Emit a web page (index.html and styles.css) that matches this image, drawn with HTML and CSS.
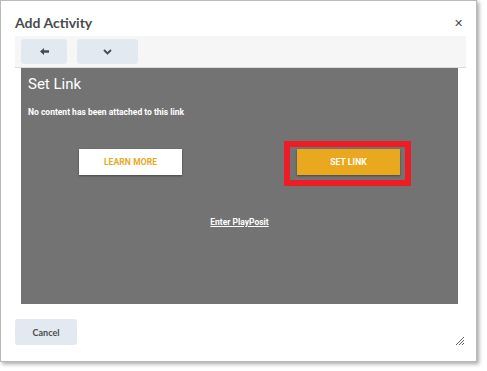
FILE: index.html
```html
<!DOCTYPE html>
<html>
<head>
<meta charset="utf-8">
<link rel="stylesheet" href="styles.css">
</head>
<body>
<div class="dialog">
  <div class="header">
    <span class="title">Add Activity</span>
    <span class="close">&#x2715;</span>
  </div>
  <div class="frame">
    <div class="toolbar">
      <div class="tbtn back">
        <svg width="9" height="7" viewBox="0 0 9 7"><path d="M0 3.5 L4 0 L4 2.3 L9 2.3 L9 4.7 L4 4.7 L4 7 Z" fill="#494c4e"/></svg>
      </div>
      <div class="tbtn drop">
        <svg width="9" height="6" viewBox="0 0 9 6"><path d="M1 1 L4.5 4.5 L8 1" fill="none" stroke="#494c4e" stroke-width="1.8"/></svg>
      </div>
    </div>
    <div class="panel">
      <div class="ptitle">Set Link</div>
      <div class="pmsg">No content has been attached to this link</div>
      <div class="actions">
        <div class="btn learn">LEARN MORE</div>
        <div class="highlight"><div class="btn setlink">SET LINK</div></div>
      </div>
      <div class="enter"><span>Enter PlayPosit</span></div>
    </div>
  </div>
  <div class="footer">
    <div class="cancel">Cancel</div>
    <svg class="grip" width="10" height="10" viewBox="0 0 10 10"><path d="M1 9 L9 1 M4 9 L9 4 M7 9 L9 7" stroke="#666" stroke-width="1"/></svg>
  </div>
</div>
</body>
</html>
```
FILE: styles.css
```css
html, body { margin: 0; padding: 0; background: #fff; }
body { width: 487px; height: 371px; overflow: hidden; }
.dialog {
  width: 477px; height: 362px; box-sizing: border-box;
  border: 1px solid #b9b9b9;
  box-shadow: 2px 2px 4px rgba(0,0,0,0.35);
  background: #fff;
  font-family: Lato, "Liberation Sans", sans-serif;
  position: relative;
}
.header {
  height: 35px; display: flex; align-items: center; justify-content: space-between;
  padding: 0 13px 0 14px; box-sizing: border-box;
}
.title { font-size: 14px; font-weight: 700; color: #494c4e; padding-top: 8px; }
.close { font-size: 11px; color: #494c4e; padding-top: 8px; }
.frame { margin-left: 14px; width: 451px; }
.toolbar {
  height: 32px; box-sizing: border-box; background: #f6f6f6;
  border-bottom: 1px solid #dcdcdc;
  display: flex; gap: 10px; padding: 3px 0 0 6px;
}
.tbtn {
  height: 25px; background: #e3e9f1; border-radius: 3px;
  display: flex; align-items: center; justify-content: center;
}
.back { width: 46px; }
.drop { width: 61px; }
.panel {
  margin-left: 6px; width: 437px; height: 236px; background: #737373;
  font-family: Roboto, "Liberation Sans", sans-serif; color: #fff;
  padding-top: 6px; box-sizing: border-box;
}
.ptitle { font-size: 15px; line-height: 20px; padding-left: 7px; }
.pmsg { font-size: 8.5px; font-weight: 700; line-height: 12px; padding-left: 7px; margin-top: 12px; }
.actions { display: flex; align-items: flex-start; margin-top: 23px; padding-left: 58px; }
.btn {
  width: 103px; height: 26px; display: flex; align-items: center; justify-content: center;
  font-size: 8.5px; font-weight: 700; letter-spacing: 0.1px;
  box-shadow: 0 1px 2px rgba(0,0,0,0.4);
}
.learn { background: #fff; color: #e9a81f; margin-top: 8px; }
.highlight {
  margin-left: 102px; border: 6px solid #ee1c25; padding: 2px 5px 5px 7px;
}
.setlink { background: #eaa81e; color: #fff; }
.enter { text-align: center; margin-top: 31px; font-size: 8.5px; font-weight: 700; }
.enter span { text-decoration: underline; }
.footer { display: flex; justify-content: space-between; align-items: flex-start; padding: 15px 14px 0 14px; }
.cancel {
  width: 62px; height: 26px; background: #e3e9f1; border-radius: 3px;
  display: flex; align-items: center; justify-content: center;
  font-size: 9px; font-weight: 700; color: #494c4e;
}
.grip { margin-top: 17px; margin-right: -3px; }
```
